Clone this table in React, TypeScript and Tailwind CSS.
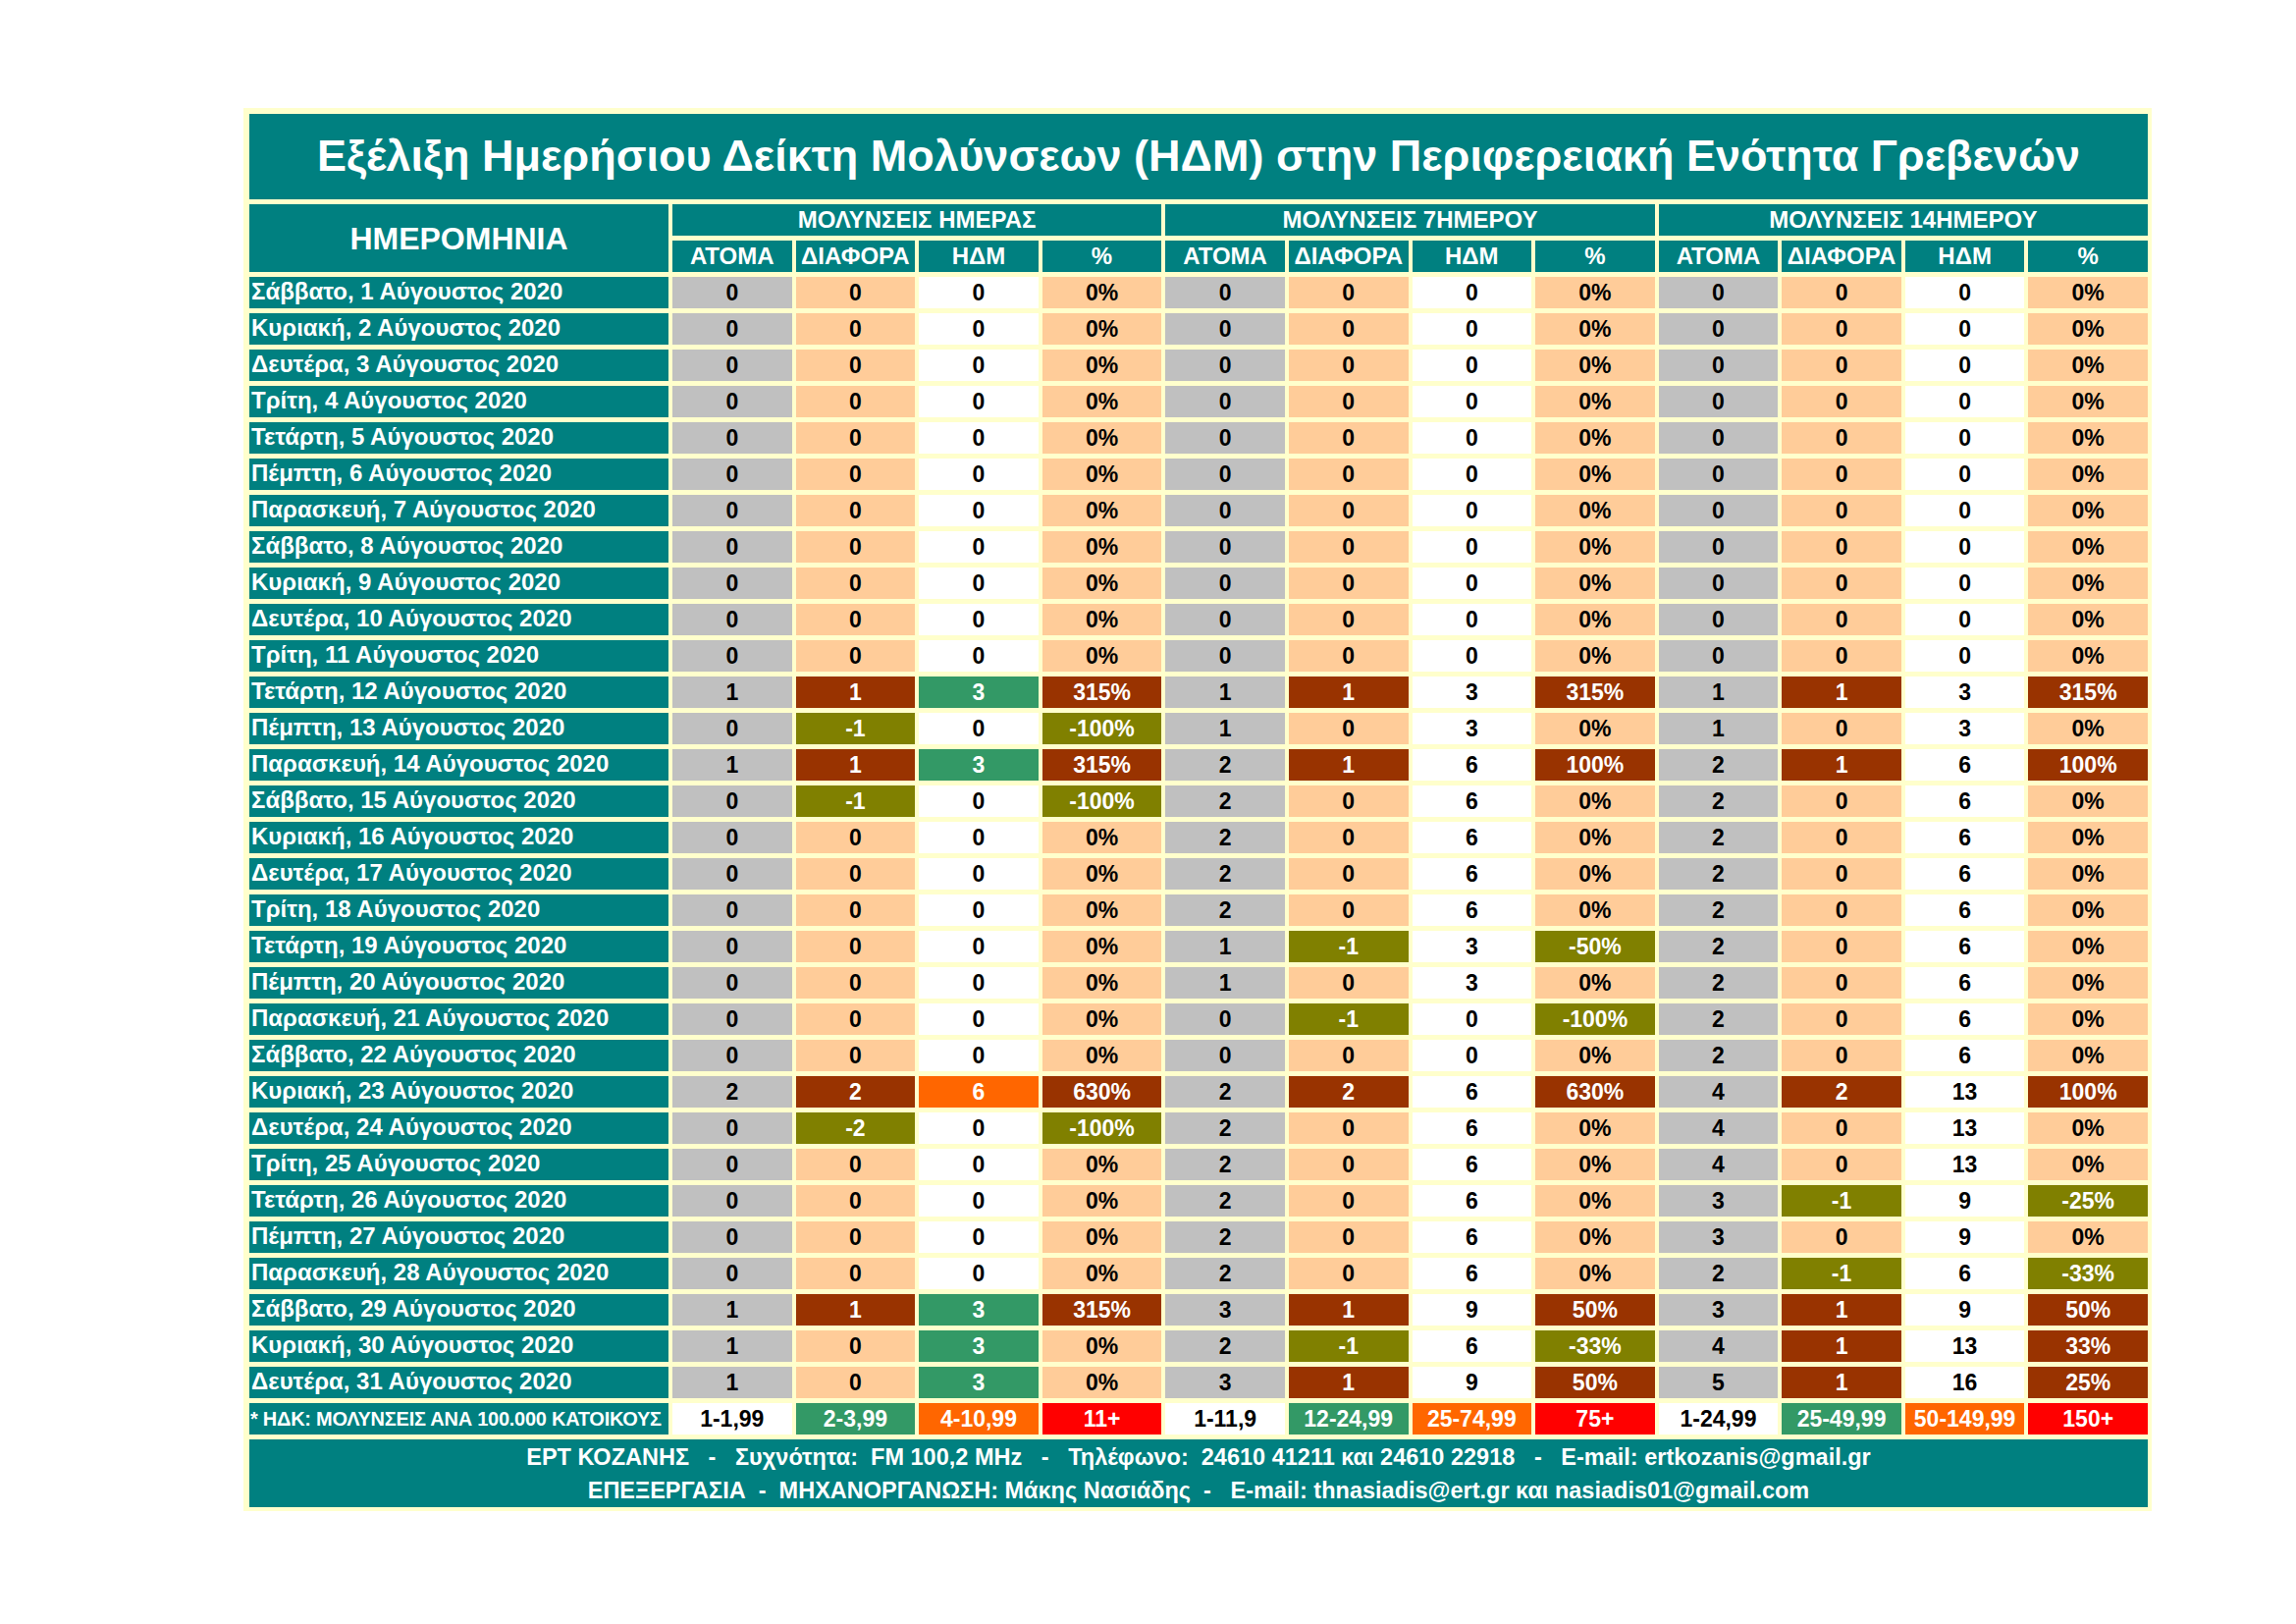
import React from "react";

const days = ["Σάββατο","Κυριακή","Δευτέρα","Τρίτη","Τετάρτη","Πέμπτη","Παρασκευή"];

const z = ["0","0","0","0%"];
const rows: string[][] = [];
for (let i = 0; i < 11; i++) rows.push([...z, ...z, ...z]);
rows.push(["1","1","3","315%","1","1","3","315%","1","1","3","315%"]); // 12
rows.push(["0","-1","0","-100%","1","0","3","0%","1","0","3","0%"]); // 13
rows.push(["1","1","3","315%","2","1","6","100%","2","1","6","100%"]); // 14
rows.push(["0","-1","0","-100%","2","0","6","0%","2","0","6","0%"]); // 15
rows.push([...z,"2","0","6","0%","2","0","6","0%"]); // 16
rows.push([...z,"2","0","6","0%","2","0","6","0%"]); // 17
rows.push([...z,"2","0","6","0%","2","0","6","0%"]); // 18
rows.push([...z,"1","-1","3","-50%","2","0","6","0%"]); // 19
rows.push([...z,"1","0","3","0%","2","0","6","0%"]); // 20
rows.push([...z,"0","-1","0","-100%","2","0","6","0%"]); // 21
rows.push([...z,"0","0","0","0%","2","0","6","0%"]); // 22
rows.push(["2","2","6","630%","2","2","6","630%","4","2","13","100%"]); // 23
rows.push(["0","-2","0","-100%","2","0","6","0%","4","0","13","0%"]); // 24
rows.push([...z,"2","0","6","0%","4","0","13","0%"]); // 25
rows.push([...z,"2","0","6","0%","3","-1","9","-25%"]); // 26
rows.push([...z,"2","0","6","0%","3","0","9","0%"]); // 27
rows.push([...z,"2","0","6","0%","2","-1","6","-33%"]); // 28
rows.push(["1","1","3","315%","3","1","9","50%","3","1","9","50%"]); // 29
rows.push(["1","0","3","0%","2","-1","6","-33%","4","1","13","33%"]); // 30
rows.push(["1","0","3","0%","3","1","9","50%","5","1","16","25%"]); // 31

const GRAY = "bg-[#c0c0c0] text-black";
const PEACH = "bg-[#ffcc99] text-black";
const WHITE = "bg-white text-black";
const BROWN = "bg-[#993300] text-white";
const OLIVE = "bg-[#808000] text-white";
const GREEN = "bg-[#339966] text-white";
const ORANGE = "bg-[#ff6600] text-white";
const RED = "bg-[#ff0000] text-white";

const thresholds = [
  [2, 4, 11],
  [12, 25, 75],
  [25, 50, 150],
];

function signColor(v: string) {
  const n = parseFloat(v);
  if (n > 0) return BROWN;
  if (n < 0) return OLIVE;
  return PEACH;
}

function cellColor(col: number, v: string) {
  const g = Math.floor(col / 4);
  const k = col % 4;
  if (k === 0) return GRAY;
  if (k === 1 || k === 3) return signColor(v);
  const n = parseFloat(v);
  const [t1, t2, t3] = thresholds[g];
  if (n >= t3) return RED;
  if (n >= t2) return ORANGE;
  if (n >= t1) return GREEN;
  return WHITE;
}

const legend: [string, string][] = [
  ["1-1,99", WHITE], ["2-3,99", GREEN], ["4-10,99", ORANGE], ["11+", RED],
  ["1-11,9", WHITE], ["12-24,99", GREEN], ["25-74,99", ORANGE], ["75+", RED],
  ["1-24,99", WHITE], ["25-49,99", GREEN], ["50-149,99", ORANGE], ["150+", RED],
];

const sub = ["ΑΤΟΜΑ", "ΔΙΑΦΟΡΑ", "ΗΔΜ", "%"];
const groups = ["ΜΟΛΥΝΣΕΙΣ ΗΜΕΡΑΣ", "ΜΟΛΥΝΣΕΙΣ 7ΗΜΕΡΟΥ", "ΜΟΛΥΝΣΕΙΣ 14ΗΜΕΡΟΥ"];

export default function App() {
  return (
    <div className="w-[2339px] h-[1654px] bg-white font-['Liberation_Sans',Arial,sans-serif] font-bold">
      <div className="ml-[248px] pt-[110px]">
        <div className="w-[1944px] bg-[#ffffcc] pt-[6px] pl-[6px] pr-[4px] pb-[4px] flex flex-col gap-[5px]">
          <div className="h-[87px] bg-[#008080] text-white text-[45px] flex items-center justify-center pb-[2px]">
            Εξέλιξη Ημερήσιου Δείκτη Μολύνσεων (ΗΔΜ) στην Περιφερειακή Ενότητα Γρεβενών
          </div>
          <div className="grid grid-cols-[427px_repeat(12,minmax(0,1fr))] gap-x-[4px] gap-y-[5px] auto-rows-[32px]">
            <div className="row-span-2 bg-[#008080] text-white text-[32px] flex items-center justify-center">
              ΗΜΕΡΟΜΗΝΙΑ
            </div>
            {groups.map((g) => (
              <div key={g} className="col-span-4 bg-[#008080] text-white text-[24px] flex items-center justify-center">
                {g}
              </div>
            ))}
            {[0, 1, 2].flatMap((gi) =>
              sub.map((s) => (
                <div key={gi + s} className="bg-[#008080] text-white text-[24px] flex items-center justify-center">
                  {s}
                </div>
              ))
            )}
            {rows.map((r, i) => (
              <React.Fragment key={i}>
                <div className="bg-[#008080] text-white text-[24px] flex items-center pl-[2px] pb-[3px] whitespace-nowrap overflow-hidden">
                  {days[i % 7]}, {i + 1} Αύγουστος 2020
                </div>
                {r.map((v, c) => (
                  <div key={c} className={`${cellColor(c, v)} text-[23px] flex items-center justify-center`}>
                    {v}
                  </div>
                ))}
              </React.Fragment>
            ))}
            <div className="bg-[#008080] text-white text-[20px] tracking-[-0.25px] flex items-center pl-[1px] whitespace-nowrap overflow-hidden">
              * ΗΔΚ: ΜΟΛΥΝΣΕΙΣ ΑΝΑ 100.000 ΚΑΤΟΙΚΟΥΣ
            </div>
            {legend.map(([t, c]) => (
              <div key={t} className={`${c} text-[23px] flex items-center justify-center`}>
                {t}
              </div>
            ))}
          </div>
          <div className="h-[69px] bg-[#008080] text-white text-[23.5px] leading-[34px] flex flex-col items-center justify-center whitespace-pre">
            <div>ΕΡΤ ΚΟΖΑΝΗΣ   -   Συχνότητα:  FM 100,2 MHz   -   Τηλέφωνο:  24610 41211 και 24610 22918   -   E-mail: ertkozanis@gmail.gr</div>
            <div>ΕΠΕΞΕΡΓΑΣΙΑ  -  ΜΗΧΑΝΟΡΓΑΝΩΣΗ: Μάκης Νασιάδης  -   E-mail: thnasiadis@ert.gr και nasiadis01@gmail.com</div>
          </div>
        </div>
      </div>
    </div>
  );
}
